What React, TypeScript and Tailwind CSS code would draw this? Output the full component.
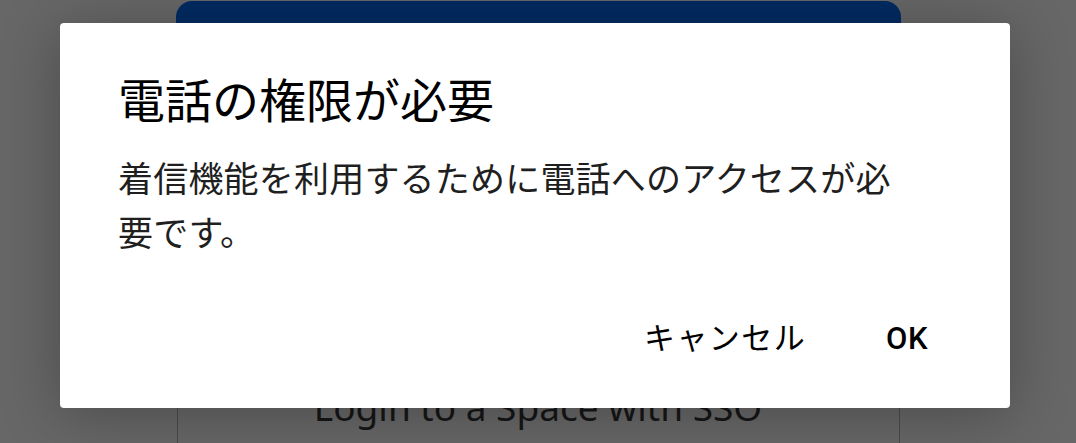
import React from "react";

const PhonePermissionDialog = () => {
  return (
    <div className="w-[950px] h-[385px] bg-white rounded-[4px] shadow-[0_6px_60px_rgba(0,0,0,0.28)] flex flex-col pl-[58px] pr-[58px] pt-[51px] font-['Roboto','Noto_Sans_CJK_JP',sans-serif]">
      <h2 className="text-[47px] leading-[56px] text-black font-normal">
        電話の権限が必要
      </h2>
      <p className="mt-[24px] w-[800px] text-[35px] leading-[54px] tracking-[0.2px] text-[#1f1f1f]">
        着信機能を利用するために電話へのアクセスが必要です。
      </p>
      <div className="mt-[57px] flex justify-end items-center gap-[80px] -mr-[58px] pr-[82px] h-[40px]">
        <button className="text-[31px] leading-[40px] tracking-[1.4px] text-black font-normal">
          キャンセル
        </button>
        <button className="text-[31px] leading-[40px] tracking-[0.5px] text-black font-medium">
          OK
        </button>
      </div>
    </div>
  );
};

export default function App() {
  return (
    <div className="relative w-[1076px] h-[443px] overflow-hidden bg-[#676767]">
      {/* page behind the scrim */}
      <div className="flex flex-col items-center pt-[1px]">
        <div className="w-[725px] h-[120px] rounded-[16px] bg-[#022b63]" />
        <div className="mt-[239px] w-[723px] h-[140px] border-x border-[#4a4a4a] flex justify-center pt-[25px]">
          <span className="font-['Noto_Sans',sans-serif] text-[37px] leading-[44px] text-[#161616]">
            Login to a Space with SSO
          </span>
        </div>
      </div>

      {/* dialog */}
      <div className="absolute inset-0 pl-[60px] pt-[23px]">
        <PhonePermissionDialog />
      </div>
    </div>
  );
}
